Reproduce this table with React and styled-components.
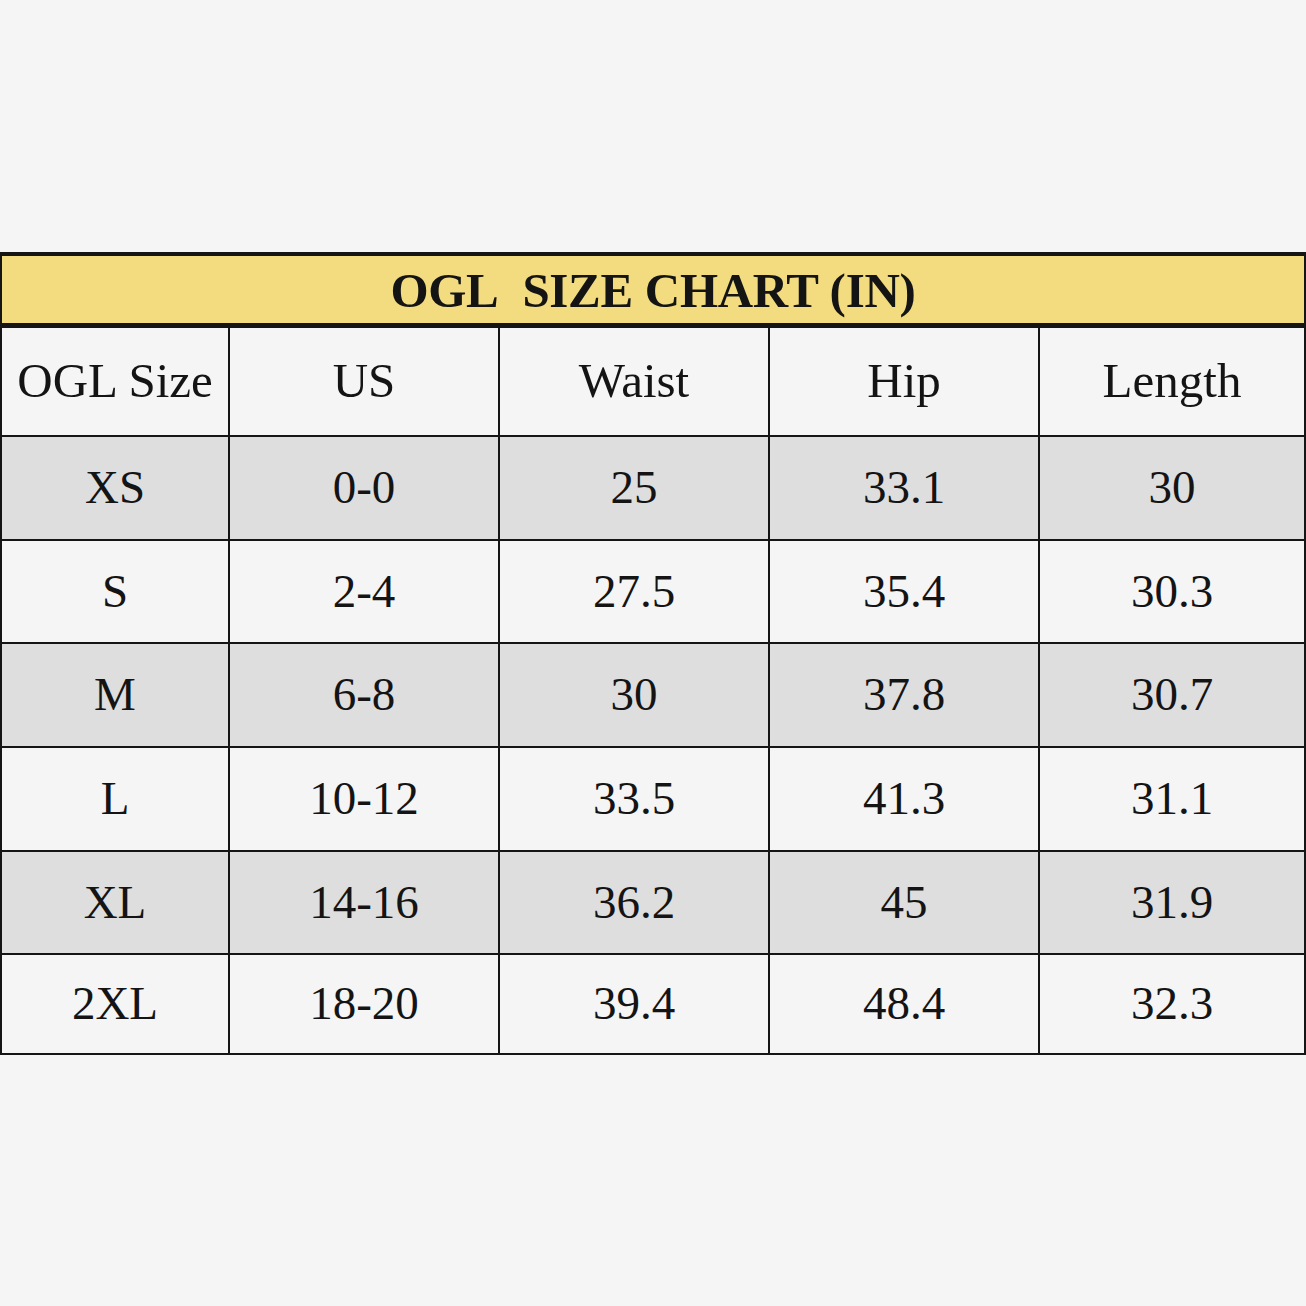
import React from 'react'
import styled, { createGlobalStyle } from 'styled-components'

const GlobalStyle = createGlobalStyle`
  html, body {
    margin: 0;
    padding: 0;
    background: #f5f5f5;
  }
`

const columns = ['OGL Size', 'US', 'Waist', 'Hip', 'Length']

const rows = [
  ['XS', '0-0', '25', '33.1', '30'],
  ['S', '2-4', '27.5', '35.4', '30.3'],
  ['M', '6-8', '30', '37.8', '30.7'],
  ['L', '10-12', '33.5', '41.3', '31.1'],
  ['XL', '14-16', '36.2', '45', '31.9'],
  ['2XL', '18-20', '39.4', '48.4', '32.3']
]

export default function App() {
  return (
    <Page>
      <GlobalStyle />
      <Chart>
        <Title>OGL&nbsp; SIZE CHART (IN)</Title>
        {columns.map(col => (
          <HeadCell key={col}>{col}</HeadCell>
        ))}
        {rows.map((row, i) =>
          row.map((value, j) => (
            <Cell key={`${i}-${j}`} shaded={i % 2 === 0}>
              {value}
            </Cell>
          ))
        )}
      </Chart>
    </Page>
  )
}

const Page = styled.div`
  width: 1306px;
  height: 1306px;
  padding-top: 252px;
  box-sizing: border-box;
  background: #f5f5f5;
  font-family: 'Liberation Serif', 'Times New Roman', serif;
  color: #141414;
`

// title row includes the thick rule below it (margin-bottom)
const Chart = styled.div`
  display: grid;
  grid-template-columns: 226px 268px 268px 268px 1fr;
  grid-template-rows: 70px 107px 102px 101px 102px 102px 101px 98px;
  gap: 2px;
  background: #151515;
  border: 2px solid #151515;
  border-top-width: 4px;
`

const Title = styled.div`
  grid-column: 1 / -1;
  margin-bottom: 3px;
  background: #f2dc7f;
  display: flex;
  align-items: center;
  justify-content: center;
  font-size: 49px;
  font-weight: 700;
  letter-spacing: -0.3px;
  padding-top: 2px;
`

const Cell = styled.div`
  background: ${p => (p.shaded ? '#dedede' : '#f5f5f5')};
  display: flex;
  align-items: center;
  justify-content: center;
  font-size: 47px;
  padding-bottom: 2px;
`

const HeadCell = styled(Cell)`
  font-size: 49px;
`
